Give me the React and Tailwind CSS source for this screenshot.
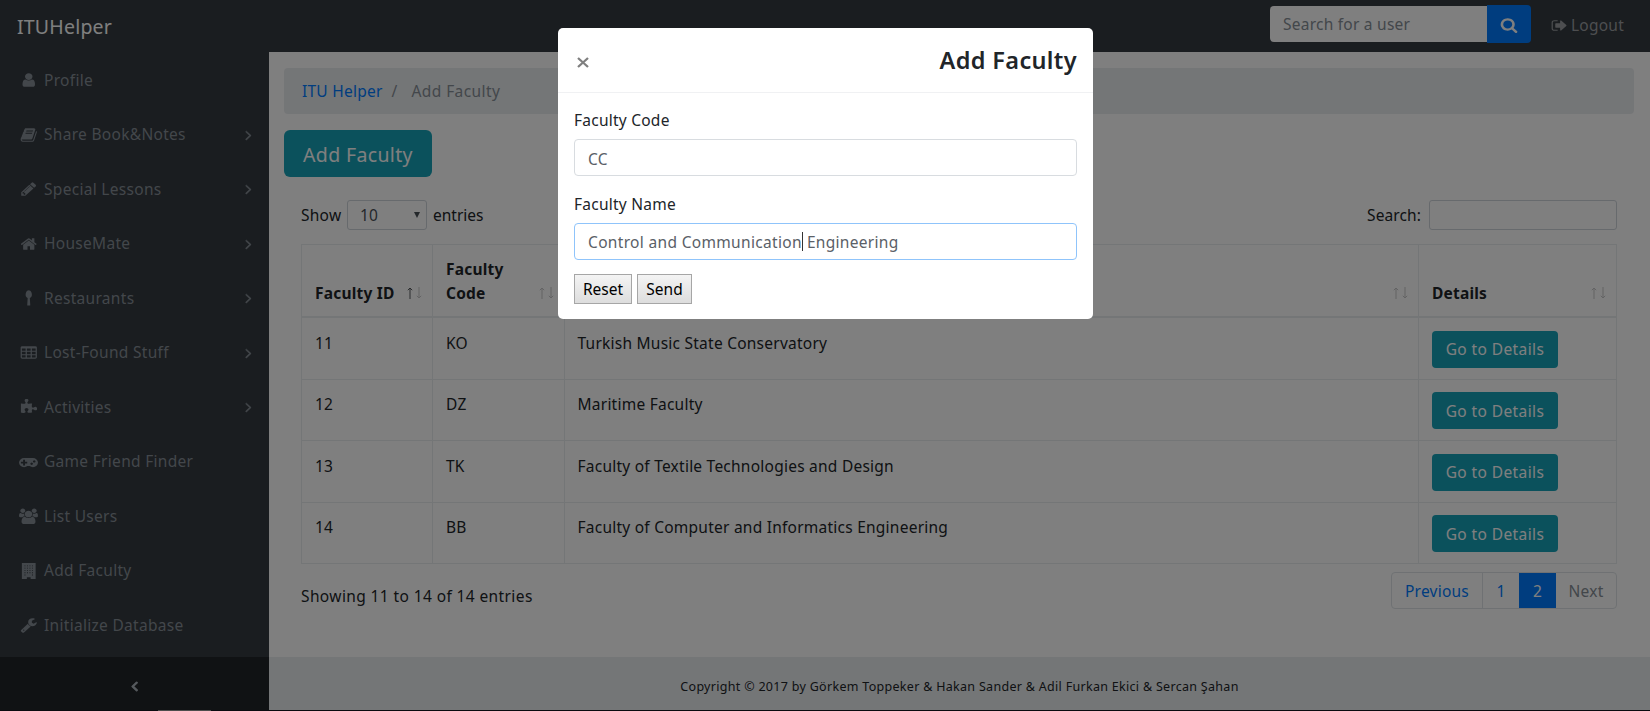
const paths = {
  search:
    "M1216 832q0-185-131.5-316.5t-316.5-131.5-316.5 131.5-131.5 316.5 131.5 316.5 316.5 131.5 316.5-131.5 131.5-316.5zm512 832q0 52-38 90t-90 38q-54 0-90-38l-343-342q-179 124-399 124-143 0-273.5-55.5t-225-150-150-225-55.5-273.5 55.5-273.5 150-225 225-150 273.5-55.5 273.5 55.5 225 150 150 225 55.5 273.5q0 220-124 399l343 343q37 37 37 90z",
  user: "M1536 1399q0 109-62.5 187t-150.5 78h-854q-88 0-150.5-78t-62.5-187q0-85 8.5-160.5t31.5-152 58.5-131 94-89 134.5-34.5q131 128 313 128t313-128q76 0 134.5 34.5t94 89 58.5 131 31.5 152 8.5 160.5zm-256-887q0 159-112.5 271.5t-271.5 112.5-271.5-112.5-112.5-271.5 112.5-271.5 271.5-112.5 271.5 112.5 112.5 271.5z",
  book: "M1703 478q40 57 18 129l-275 906q-19 64-76.5 107.5t-122.5 43.5h-923q-77 0-148.5-53.5t-99.5-131.5q-24-67-2-127 0-4 3-27t4-37q1-8-3-21.5t-3-19.5q2-11 8-21t16.5-23.5 16.5-23.5q23-38 45-91.5t30-91.5q3-10 .5-30t-.5-28q3-11 17-28t17-23q21-36 42-92t25-90q1-9-2.5-32t.5-28q4-13 22-30.5t22-22.5q19-26 42.5-84.5t27.5-96.5q1-8-3-25.5t-2-26.5q2-8 9-18t18-23 17-21q8-12 16.5-30.5t15-35 16-36 19.5-32 26.5-23.5 36-11.5 47.5 5.5l-1 3q38-9 51-9h761q74 0 114 56t18 130l-274 906q-36 119-71.5 153.5t-128.5 34.5h-869q-27 0-38 15-11 16-1 43 24 70 144 70h923q29 0 56-15.5t35-41.5l300-987q7-22 5-57 38 15 59 43zm-1064 2q-4 13 2 22.5t20 9.5h608q13 0 25.5-9.5t16.5-22.5l21-64q4-13-2-22.5t-20-9.5h-608q-13 0-25.5 9.5t-16.5 22.5zm-83 256q-4 13 2 22.5t20 9.5h608q13 0 25.5-9.5t16.5-22.5l21-64q4-13-2-22.5t-20-9.5h-608q-13 0-25.5 9.5t-16.5 22.5z",
  pencil:
    "M491 1536l91-91-235-235-91 91v107h128v128h107zm523-928q0-22-22-22-10 0-17 7l-542 542q-7 7-7 17 0 22 22 22 10 0 17-7l542-542q7-7 7-17zm-54-192l416 416-832 832h-416v-416zm683 96q0 53-37 90l-166 166-416-416 166-165q36-38 90-38 53 0 91 38l235 234q37 39 37 91z",
  home: "M1472 992v480q0 26-19 45t-45 19h-384v-384h-256v384h-384q-26 0-45-19t-19-45v-480q0-1 .5-3t.5-3l575-474 575 474q1 2 1 6zm223-69l-62 74q-8 9-21 11h-3q-13 0-21-7l-692-577-692 577q-12 8-24 7-13-2-21-11l-62-74q-8-10-7-23.5t11-21.5l719-599q32-26 76-26t76 26l244 204v-195q0-14 9-23t23-9h192q14 0 23 9t9 23v408l219 182q10 8 11 21.5t-7 23.5z",
  spoon:
    "M1088 421q0 145-57 243.5t-152 135.5l45 821q2 26-16 44.5t-44 18.5h-192q-26 0-44-18.5t-16-44.5l45-821q-95-37-152-135.5t-57-243.5q0-128 42.5-249.5t117.5-200 160-78.5 160 78.5 117.5 200 42.5 249.5z",
  table:
    "M224 128h1344q66 0 113 47t47 113v1088q0 66-47 113t-113 47h-1344q-66 0-113-47t-47-113v-1088q0-66 47-113t113-47zM192 384v256h384v-256zM704 384v256h384v-256zM1216 384v256h384v-256zM192 768v256h384v-256zM704 768v256h384v-256zM1216 768v256h384v-256zM192 1152v256h384v-256zM704 1152v256h384v-256zM1216 1152v256h384v-256z",
  puzzle:
    "M1755 1083q0 81-44.5 135t-123.5 54q-41 0-77.5-17.5t-59-38-56.5-38-71-17.5q-110 0-110 124 0 39 16 115t15 115v5q-22 0-33 1-34 3-97.5 11.5t-115.5 13.5-98 5q-61 0-103-26.5t-42-83.5q0-37 17.5-71t38-56.5 38-59 17.5-77.5q0-79-54-123.5t-135-44.5q-84 0-143 45.5t-59 127.5q0 43 15 83t33.5 64.5 33.5 53 15 50.5q0 45-46 89-37 35-117 35-95 0-245-24-9-2-27.5-4t-27.5-4l-13-2q-1 0-3-1-2 0-2-1v-1024q2 1 17.5 3.5t34 5 21.5 3.5q150 24 245 24 80 0 117-35 46-44 46-89 0-22-15-50.5t-33.5-53-33.5-64.5-15-83q0-82 59-127.5t144-45.5q80 0 134 44.5t54 123.5q0 41-17.5 77.5t-38 59-38 56.5-17.5 71q0 57 42 83.5t103 26.5q64 0 180-15t163-17v2q-1 2-3.5 17.5t-5 34-3.5 21.5q-24 150-24 245 0 80 35 117 44 46 89 46 22 0 50.5-15t53-33.5 64.5-33.5 83-15q82 0 127.5 59t45.5 143z",
  gamepad:
    "M832 1088v-128q0-14-9-23t-23-9h-192v-192q0-14-9-23t-23-9h-128q-14 0-23 9t-9 23v192h-192q-14 0-23 9t-9 23v128q0 14 9 23t23 9h192v192q0 14 9 23t23 9h128q14 0 23-9t9-23v-192h192q14 0 23-9t9-23zm576 64q0-53-37.5-90.5t-90.5-37.5-90.5 37.5-37.5 90.5 37.5 90.5 90.5 37.5 90.5-37.5 37.5-90.5zm256-256q0-53-37.5-90.5t-90.5-37.5-90.5 37.5-37.5 90.5 37.5 90.5 90.5 37.5 90.5-37.5 37.5-90.5zm256 128q0 212-150 362t-362 150q-192 0-338-128h-220q-146 128-338 128-212 0-362-150t-150-362 150-362 362-150h896q212 0 362 150t150 362z",
  users:
    "M529 896q-162 5-265 128h-134q-82 0-138-40.5t-56-118.5q0-353 124-353 6 0 43.5 21t97.5 42.5 119 21.5q67 0 133-23-5 37-5 66 0 139 81 256zm1071 637q0 120-73 189.5t-194 69.5h-874q-121 0-194-69.5t-73-189.5q0-53 3.5-103.5t14-109 26.5-108.5 43-97.5 62-81 85.5-53.5 111.5-20q10 0 43 21.5t73 48 107 48 135 21.5 135-21.5 107-48 73-48 43-21.5q61 0 111.5 20t85.5 53.5 62 81 43 97.5 26.5 108.5 14 109 3.5 103.5zm-1024-1277q0 106-75 181t-181 75-181-75-75-181 75-181 181-75 181 75 75 181zm704 384q0 159-112.5 271.5t-271.5 112.5-271.5-112.5-112.5-271.5 112.5-271.5 271.5-112.5 271.5 112.5 112.5 271.5zm576 225q0 78-56 118.5t-138 40.5h-134q-103-123-265-128 81-117 81-256 0-29-5-66 66 23 133 23 59 0 119-21.5t97.5-42.5 43.5-21q124 0 124 353zm-128-609q0 106-75 181t-181 75-181-75-75-181 75-181 181-75 181 75 75 181z",
  building:
    "M192 0h1408v1792h-512v-192h-384v192h-512zM458 266v100h100v-100zM714 266v100h100v-100zM970 266v100h100v-100zM1226 266v100h100v-100zM458 522v100h100v-100zM714 522v100h100v-100zM970 522v100h100v-100zM1226 522v100h100v-100zM458 778v100h100v-100zM714 778v100h100v-100zM970 778v100h100v-100zM1226 778v100h100v-100zM458 1034v100h100v-100zM714 1034v100h100v-100zM970 1034v100h100v-100zM1226 1034v100h100v-100zM458 1290v100h100v-100zM1226 1290v100h100v-100z",
  wrench:
    "M448 1472q0-26-19-45t-45-19-45 19-19 45 19 45 45 19 45-19 19-45zm644-420l-682 682q-37 37-90 37-52 0-91-37l-106-108q-38-36-38-90 0-53 38-91l681-681q39 98 114.5 173.5t173.5 114.5zm634-435q0 39-23 106-47 134-164.5 217.5t-258.5 83.5q-185 0-316.5-131.5t-131.5-316.5 131.5-316.5 316.5-131.5q58 0 121.5 16.5t107.5 46.5q16 11 16 28t-16 28l-293 169v224l193 107q5-3 79-48.5t135.5-81 70.5-35.5q15 0 23.5 10t8.5 25z",
  signOut:
    "M704 1440q0 4 1 20t.5 26.5-3 23.5-10 19.5-20.5 6.5h-320q-119 0-203.5-84.5t-84.5-203.5v-704q0-119 84.5-203.5t203.5-84.5h320q13 0 22.5 9.5t9.5 22.5q0 4 1 20t.5 26.5-3 23.5-10 19.5-20.5 6.5h-320q-66 0-113 47t-47 113v704q0 66 47 113t113 47h312l11.5 1 11.5 3 8 5.5 7 9 2 13.5zm928-544q0 26-19 45l-544 544q-19 19-45 19t-45-19-19-45v-288h-448q-26 0-45-19t-19-45v-384q0-26 19-45t45-19h448v-288q0-26 19-45t45-19 45 19l544 544q19 19 19 45z",
  angle:
    "M1171 960q0 13-10 23l-466 466q-10 10-23 10t-23-10l-50-50q-10-10-10-23t10-23l393-393-393-393q-10-10-10-23t10-23l50-50q10-10 23-10t23 10l466 466q10 10 10 23z",
};

const viewBoxes = {
  spoon: "-128 -128 1792 1856",
  gamepad: "0 60 1920 1792",
  users: "-64 -60 1920 1852",
};

function Icon({ name, className }) {
  return (
    <svg
      viewBox={viewBoxes[name] || "0 0 1792 1792"}
      preserveAspectRatio="none"
      className={className}
      fill="currentColor"
      fillRule="evenodd"
    >
      <path d={paths[name]} />
    </svg>
  );
}

const menu = [
  { label: "Profile", icon: "user" },
  { label: "Share Book&Notes", icon: "book", sub: true },
  { label: "Special Lessons", icon: "pencil", sub: true },
  { label: "HouseMate", icon: "home", sub: true },
  { label: "Restaurants", icon: "spoon", sub: true },
  { label: "Lost-Found Stuff", icon: "table", sub: true },
  { label: "Activities", icon: "puzzle", sub: true },
  { label: "Game Friend Finder", icon: "gamepad", wide: true },
  { label: "List Users", icon: "users", wide: true },
  { label: "Add Faculty", icon: "building" },
  { label: "Initialize Database", icon: "wrench" },
];

const faculties = [
  { id: 11, code: "KO", name: "Turkish Music State Conservatory" },
  { id: 12, code: "DZ", name: "Maritime Faculty" },
  { id: 13, code: "TK", name: "Faculty of Textile Technologies and Design" },
  { id: 14, code: "BB", name: "Faculty of Computer and Informatics Engineering" },
];

function Navbar() {
  return (
    <header className="flex h-[52px] shrink-0 items-start justify-between bg-[#343a40] pl-[17px] pr-[26px] pt-[5px]">
      <a className="pt-[7px] text-[19.5px] leading-[30px] tracking-[0.2px] text-white">ITUHelper</a>
      <div className="flex items-start">
        <div className="mt-px flex h-9 w-[217px] items-center rounded-l bg-white pl-[13px] pt-px text-[#868e96]">
          Search for a user
        </div>
        <button className="flex h-[38px] w-11 items-center justify-center rounded-r bg-[#007bff] pt-px text-white">
          <Icon name="search" className="h-[16px] w-[18px]" />
        </button>
        <a className="ml-5 flex h-[40px] w-[73px] items-center gap-[3px] whitespace-nowrap text-[#9a9da0]">
          <Icon name="signOut" className="h-[15px] w-[17px] shrink-0" />
          <span>Logout</span>
        </a>
      </div>
    </header>
  );
}

function Sidebar() {
  return (
    <nav className="flex w-[269px] shrink-0 flex-col bg-[#343a40] text-[#868e96]">
      <ul className="flex flex-1 flex-col pt-px">
        {menu.map((m) => (
          <li key={m.label} className="flex h-[54.5px] items-center pl-[18px] pr-[12px]">
            <span className="flex w-[21px] justify-center">
              <Icon name={m.icon} className={m.wide ? "h-[16px] w-[19px]" : "h-[16px] w-[17.5px]"} />
            </span>
            <span className="ml-[5px] flex-1 tracking-[0.3px]">{m.label}</span>
            {m.sub && <Icon name="angle" className="h-[16px] w-[17px] stroke-current stroke-[50]" />}
          </li>
        ))}
      </ul>
      <button className="flex h-[53px] items-center justify-center bg-[#212529] pt-[6px] text-[#adb5bd]">
        <Icon name="angle" className="h-[16px] w-[17px] rotate-180 stroke-current stroke-[110]" />
      </button>
    </nav>
  );
}

function SortArrows({ up }) {
  return (
    <span className="flex gap-[3px] pb-[6px]">
      <svg viewBox="0 0 6 12" className={up ? "h-3 w-[6px] opacity-75" : "h-3 w-[6px] opacity-25"} fill="none" stroke="currentColor">
        <path d="M3 12V1M0.8 3.2L3 1L5.2 3.2" />
      </svg>
      <svg viewBox="0 0 6 12" className="h-3 w-[6px] opacity-25" fill="none" stroke="currentColor">
        <path d="M3 0V11M0.8 8.8L3 11L5.2 8.8" />
      </svg>
    </span>
  );
}

function HeaderCell({ children, up, last }) {
  return (
    <div
      className={
        last
          ? "flex items-end justify-between pb-[11px] pl-[13px] pr-[10px]"
          : "flex items-end justify-between border-r border-[#e9ecef] pb-[11px] pl-[13px] pr-[10px]"
      }
    >
      <span className="leading-[23.4px]">{children}</span>
      <SortArrows up={up} />
    </div>
  );
}

function FacultyTable() {
  const cols = "grid grid-cols-[131px_132px_854px_1fr]";
  return (
    <div className="border border-[#e9ecef]">
      <div className={cols + " h-[73px] border-b-2 border-[#e9ecef] font-bold tracking-[0.2px]"}>
        <HeaderCell up>Faculty ID</HeaderCell>
        <HeaderCell>
          Faculty
          <br />
          Code
        </HeaderCell>
        <HeaderCell />
        <HeaderCell last>Details</HeaderCell>
      </div>
      {faculties.map((f, i) => (
        <div
          key={f.id}
          className={cols + (i < 3 ? " h-[61.5px] border-b border-[#e9ecef]" : " h-[60.5px]")}
        >
          <div className="border-r border-[#e9ecef] pl-[13px] pt-[13.5px]">{f.id}</div>
          <div className="border-r border-[#e9ecef] pl-[13px] pt-[13.5px]">{f.code}</div>
          <div className="border-r border-[#e9ecef] pl-[12.5px] pt-[13.5px]">{f.name}</div>
          <div className="pl-[13px] pt-[12.5px]">
            <button className="h-[37px] w-[126px] rounded bg-[#17a2b8] pt-px tracking-[0.4px] text-white">Go to Details</button>
          </div>
        </div>
      ))}
    </div>
  );
}

function Content() {
  return (
    <main className="flex flex-1 flex-col bg-white">
      <div className="flex flex-1 flex-col pl-[15px] pr-4 pt-4">
        <div className="flex h-[46px] items-center rounded bg-[#e9ecef] pl-[18px] pt-px">
          <a className="text-[#007bff]">ITU Helper</a>
          <span className="ml-[9px] text-[#868e96]">/</span>
          <span className="ml-[14px] tracking-[0.4px] text-[#868e96]">Add Faculty</span>
        </div>
        <button className="mt-4 h-[47px] w-[148px] rounded-md bg-[#17a2b8] pt-px text-[19.5px] tracking-[0.35px] text-white">
          Add Faculty
        </button>
        <div className="px-[17px] pt-[23px]">
          <div className="flex h-[30px] items-center">
            <span className="w-[46px]">Show</span>
            <div className="flex h-[30px] w-[80px] items-center justify-between rounded-[3px] border border-[#ced4da] pl-[12px] pr-[6px] text-[#495057]">
              <span>10</span>
              <svg viewBox="0 0 6 6" className="h-[6px] w-[6px]" fill="currentColor">
                <path d="M0 0H6L3 6Z" />
              </svg>
            </div>
            <span className="ml-[6px] tracking-normal">entries</span>
            <span className="ml-auto tracking-[0.1px]">Search:</span>
            <div className="ml-2 h-[30px] w-[188px] rounded-[3px] border border-[#ced4da]" />
          </div>
          <div className="pt-[14px]">
            <FacultyTable />
          </div>
          <div className="flex items-start justify-between pt-2">
            <span className="pt-[13px] tracking-[0.39px]">Showing 11 to 14 of 14 entries</span>
            <div className="flex h-[37px] overflow-hidden rounded border border-[#dee2e6] pt-px">
              <a className="-mt-px flex w-[91px] items-center justify-center border-r border-[#dee2e6] pt-[2px] text-[#007bff]">Previous</a>
              <a className="flex w-9 items-center justify-center pt-px text-[#007bff]">1</a>
              <a className="-mt-px flex w-[37px] items-center justify-center bg-[#007bff] pt-[2px] text-white">2</a>
              <a className="flex w-[60px] items-center justify-center pt-px text-[#868e96]">Next</a>
            </div>
          </div>
        </div>
      </div>
      <footer className="flex h-[53px] items-center justify-center bg-[#e9ecef] text-[12.5px] tracking-[0.3px]">
        <span className="pt-[5px]">Copyright © 2017 by Görkem Toppeker &amp; Hakan Sander &amp; Adil Furkan Ekici &amp; Sercan Şahan</span>
      </footer>
    </main>
  );
}

function Modal() {
  const native =
    "h-[30px] border border-[#a6a6a6] bg-linear-to-b from-[#f4f4f4] to-[#dddddd] pt-px text-black tracking-normal";
  return (
    <div className="absolute left-[558px] top-[28px] w-[535px] rounded-[5px] bg-white pb-[15px]">
      <div className="flex h-[65px] items-center justify-between border-b border-[#f0f1f3] pl-[19px] pr-4">
        <svg viewBox="0 0 12 11" className="mt-1 h-[11px] w-3" stroke="#7f7f7f" strokeWidth="2.3">
          <path d="M1 1L11 10M11 1L1 10" />
        </svg>
        <h5 className="pt-[2px] text-[23.5px] font-semibold leading-none tracking-[0.35px]">Add Faculty</h5>
      </div>
      <div className="px-4 pt-4">
        <label className="block leading-[23px]">Faculty Code</label>
        <div className="mt-[7px] flex h-[37px] items-center rounded border border-[#d8dce0] pl-[13px] text-[#5a6067]">
          <span className="pt-[3px]">CC</span>
        </div>
        <label className="mt-[17px] block leading-[23px]">Faculty Name</label>
        <div className="mt-[7px] flex h-[37px] items-center rounded border border-[#8fc4fb] pl-[13px] text-[#5a6067]">
          <span className="pt-px tracking-[0.33px]">Control and Communication</span>
          <span className="h-[19px] w-px bg-[#333]" />
          <span className="ml-[4px] pt-px tracking-[0.3px]">Engineering</span>
        </div>
        <div className="mt-[14px] flex gap-[5px]">
          <button className={native + " w-[58px]"}>Reset</button>
          <button className={native + " w-[55px]"}>Send</button>
        </div>
      </div>
    </div>
  );
}

export default function App() {
  return (
    <div className="relative flex h-[711px] w-[1650px] flex-col overflow-hidden font-['Noto_Sans','Open_Sans',sans-serif] text-[15.5px] leading-[23px] tracking-[0.24px] text-[#212529]">
      <Navbar />
      <div className="flex h-[658px] shrink-0">
        <Sidebar />
        <Content />
      </div>
      <div className="h-px bg-[#15151f] pl-[158px]">
        <div className="h-px w-[53px] bg-[#9a9a9a]" />
      </div>
      <div className="absolute inset-0 bg-black/50" />
      <Modal />
    </div>
  );
}
